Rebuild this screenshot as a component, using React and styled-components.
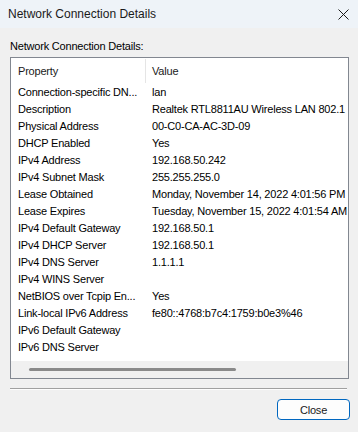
import React from "react";
import styled, { createGlobalStyle } from "styled-components";

const GlobalStyle = createGlobalStyle`
html, body {
    margin: 0;
    padding: 0;
    background: #f0f0f0;
}
body {
    font-family: "Liberation Sans", Arial, sans-serif;
    font-size: 11px;
    letter-spacing: -0.2px;
    color: #000;
}
`

const Window = styled.div`
width: 358px;
height: 432px;
display: flex;
flex-direction: column;
background-color: #f0f0f0;
overflow: hidden;`

const TitleBar = styled.div`
height: 28px;
flex-shrink: 0;
display: flex;
align-items: center;
justify-content: space-between;
padding: 0 9px 0 8px;
background-color: #eef3f8;
color: #1a1a1a;
font-size: 12px;
letter-spacing: 0;
line-height: 28px;`

const CloseIcon = styled.svg`
display: block;
width: 11px;
height: 11px;`

const Body = styled.div`
flex: 1;
display: flex;
flex-direction: column;
padding: 10px 9px 0 10px;`

const Caption = styled.div`
line-height: 15px;
height: 15px;
margin-bottom: 4px;
padding-top: 1px;
box-sizing: border-box;
color: #000;`

const ListBox = styled.div`
height: 322px;
box-sizing: border-box;
border: 1px solid #828790;
background-color: #fff;
display: flex;
flex-direction: column;
overflow: hidden;`

const Row = styled.div`
display: grid;
grid-template-columns: 134px 1fr;
height: ${p => p.$header ? "26px" : "17px"};
line-height: ${p => p.$header ? "26px" : "17px"};
flex-shrink: 0;
white-space: nowrap;`

const Cell = styled.div`
overflow: hidden;
padding-left: 7px;
color: ${p => p.$header ? "#1a1a1a" : "#000"};`

const HeaderDivider = styled(Cell)`
border-left: 1px solid #e5e5e5;
height: 24px;
margin-top: 1px;
line-height: 24px;
padding-left: 6px;`

const Rows = styled.div`
flex: 1;`

const HScroll = styled.div`
height: 17px;
flex-shrink: 0;
background-color: #f0f0f0;
display: flex;
align-items: center;
padding-left: 18px;`

const Thumb = styled.div`
width: 207px;
height: 3px;
border-radius: 2px;
background-color: #8a8a8a;`

const Separator = styled.div`
height: 1px;
background-color: #a0a0a0;
margin: 9px 2px 0 0;
border-bottom: 1px solid #fdfdfd;`

const Footer = styled.div`
display: flex;
justify-content: flex-end;
padding-top: 9px;
margin-right: -1px;`

const Button = styled.button`
width: 73px;
height: 21px;
box-sizing: border-box;
border: 1px solid #0067c0;
box-shadow: inset 0 0 0 1px #fdfdfd;
border-radius: 4px;
background-color: #fdfdfd;
font-family: "Liberation Sans", Arial, sans-serif;
font-size: 11px;
letter-spacing: -0.2px;
color: #1a1a1a;
padding: 0;`

// value column is wider than the view, so long values get clipped at the border
const details = [
    ["Connection-specific DN...", "lan"],
    ["Description", "Realtek RTL8811AU Wireless LAN 802.1"],
    ["Physical Address", "00-C0-CA-AC-3D-09"],
    ["DHCP Enabled", "Yes"],
    ["IPv4 Address", "192.168.50.242"],
    ["IPv4 Subnet Mask", "255.255.255.0"],
    ["Lease Obtained", "Monday, November 14, 2022 4:01:56 PM"],
    ["Lease Expires", "Tuesday, November 15, 2022 4:01:54 AM"],
    ["IPv4 Default Gateway", "192.168.50.1"],
    ["IPv4 DHCP Server", "192.168.50.1"],
    ["IPv4 DNS Server", "1.1.1.1"],
    ["IPv4 WINS Server", ""],
    ["NetBIOS over Tcpip En...", "Yes"],
    ["Link-local IPv6 Address", "fe80::4768:b7c4:1759:b0e3%46"],
    ["IPv6 Default Gateway", ""],
    ["IPv6 DNS Server", ""],
]

const App = () => {
    return (
        <Window>
            <GlobalStyle />
            <TitleBar>
                <span>Network Connection Details</span>
                <CloseIcon viewBox="0 0 11 11">
                    <path d="M0.5 0.5 L10.5 10.5 M10.5 0.5 L0.5 10.5" stroke="#1a1a1a" strokeWidth="1" fill="none" />
                </CloseIcon>
            </TitleBar>
            <Body>
                <Caption>Network Connection Details:</Caption>
                <ListBox>
                    <Row $header>
                        <Cell $header>Property</Cell>
                        <HeaderDivider $header>Value</HeaderDivider>
                    </Row>
                    <Rows>
                        {details.map(([name, value]) => (
                            <Row key={name}>
                                <Cell>{name}</Cell>
                                <Cell>{value}</Cell>
                            </Row>
                        ))}
                    </Rows>
                    <HScroll>
                        <Thumb />
                    </HScroll>
                </ListBox>
                <Separator />
                <Footer>
                    <Button>Close</Button>
                </Footer>
            </Body>
        </Window>
    )
}

export default App;
